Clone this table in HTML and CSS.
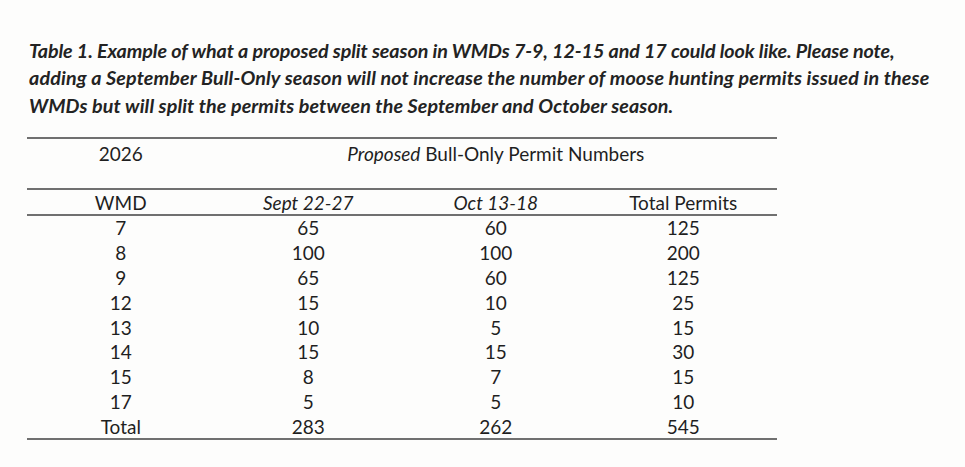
FILE: index.html
```html
<!DOCTYPE html>
<html>
<head>
<meta charset="utf-8">
<link rel="stylesheet" href="styles.css">
</head>
<body>
<div class="page">
  <p class="caption">
    <span class="line l1">Table 1. Example of what a proposed split season in WMDs 7-9, 12-15 and 17 could look like. Please note,</span>
    <span class="line l2">adding a September Bull-Only season will not increase the number of moose hunting permits issued in these</span>
    <span class="line l3">WMDs but will split the permits between the September and October season.</span>
  </p>
  <div class="table">
    <div class="row head1">
      <div class="c1">2026</div>
      <div class="c3"><em>Proposed</em> Bull-Only Permit Numbers</div>
    </div>
    <div class="row head2">
      <div>WMD</div>
      <div><em>Sept 22-27</em></div>
      <div><em>Oct 13-18</em></div>
      <div>Total Permits</div>
    </div>
    <div class="body">
      <div class="row"><div>7</div><div>65</div><div>60</div><div>125</div></div>
      <div class="row"><div>8</div><div>100</div><div>100</div><div>200</div></div>
      <div class="row"><div>9</div><div>65</div><div>60</div><div>125</div></div>
      <div class="row"><div>12</div><div>15</div><div>10</div><div>25</div></div>
      <div class="row"><div>13</div><div>10</div><div>5</div><div>15</div></div>
      <div class="row"><div>14</div><div>15</div><div>15</div><div>30</div></div>
      <div class="row"><div>15</div><div>8</div><div>7</div><div>15</div></div>
      <div class="row"><div>17</div><div>5</div><div>5</div><div>10</div></div>
      <div class="row last"><div>Total</div><div>283</div><div>262</div><div>545</div></div>
    </div>
  </div>
</div>
</body>
</html>
```
FILE: styles.css
```css
html, body {
  margin: 0;
  padding: 0;
  background: #fdfdfc;
}
.page {
  width: 965px;
  height: 467px;
  overflow: hidden;
  color: #1f1f1f;
  font-family: Lato, "Open Sans", sans-serif;
}
.caption {
  margin: 0;
  padding: 37px 0 0 29px;
  font-weight: 700;
  font-style: italic;
  font-size: 19.7px;
  line-height: 27.3px;
  color: #232323;
}
.line {
  display: block;
  white-space: nowrap;
}
.l1 { letter-spacing: -0.08px; }
.l2 { letter-spacing: 0.14px; }
.l3 { letter-spacing: 0.1px; }
.table {
  width: 750px;
  margin: 18px 0 0 27px;
  font-size: 19px;
}
.row {
  display: grid;
  grid-template-columns: repeat(4, minmax(0, 1fr));
  justify-items: center;
  line-height: 24.9px;
}
.row em {
  font-style: italic;
}
.head1 {
  border-top: 2px solid #707070;
  height: 51px;
  align-items: start;
  padding-top: 3px;
  box-sizing: border-box;
}
.head1 .c1 { grid-column: 1; }
.head1 .c3 { grid-column: 3; white-space: nowrap; }
.head2 {
  border-top: 2px solid #707070;
  border-bottom: 2px solid #707070;
  line-height: 22px;
  padding-top: 2px;
}
.body {
  border-bottom: 2px solid #707070;
}
.row.last {
  line-height: 23px;
}
```
